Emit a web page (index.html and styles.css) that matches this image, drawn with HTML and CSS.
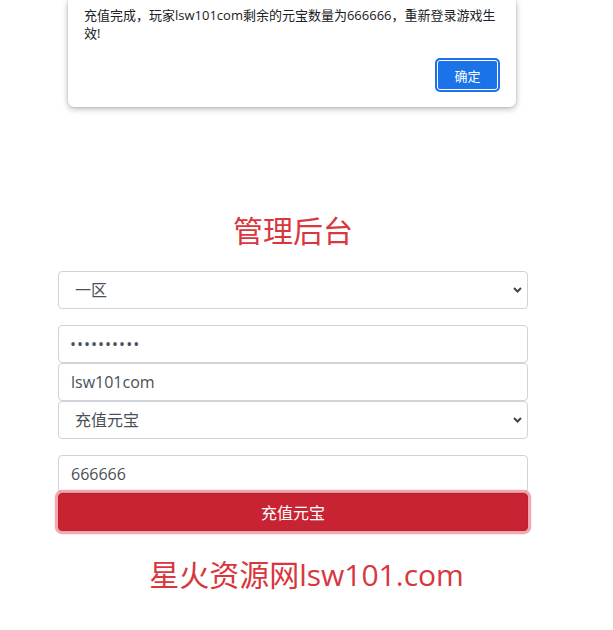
FILE: index.html
```html
<!DOCTYPE html>
<html lang="zh-CN">
<head>
<meta charset="utf-8">
<title>管理后台</title>
<link rel="stylesheet" href="styles.css">
</head>
<body>
<div class="page">
  <h1 class="title">管理后台</h1>
  <form class="form">
    <select class="control select gap">
      <option>一区</option>
    </select>
    <input class="control password" type="password" value="1234567890">
    <input class="control" type="text" value="lsw101com">
    <select class="control select gap">
      <option>充值元宝</option>
    </select>
    <input class="control" type="text" value="666666">
    <button type="button" class="btn-danger">充值元宝</button>
  </form>
  <p class="brand">星火资源网lsw101.com</p>
</div>

<div class="dialog">
  <p class="dialog-text">充值完成，玩家lsw101com剩余的元宝数量为666666，重新登录游戏生效!</p>
  <div class="dialog-actions">
    <button type="button" class="btn-ok">确定</button>
  </div>
</div>
</body>
</html>
```

FILE: styles.css
```css
* { box-sizing: border-box; }

html, body {
  margin: 0;
  padding: 0;
  background: #fff;
}

body {
  font-family: "Open Sans", "Noto Sans CJK SC", sans-serif;
  color: #212529;
  width: 613px;
  height: 630px;
  overflow: hidden;
  position: relative;
}

.page {
  padding-top: 211px;
}

.title {
  margin: 0 0 24px 58px;
  width: 470px;
  font-weight: 400;
  font-size: 30px;
  line-height: 36px;
  text-align: center;
  color: #d9363e;
  font-family: "Noto Sans CJK SC", sans-serif;
}

.form {
  margin: 0 0 0 58px;
  width: 470px;
  display: flex;
  flex-direction: column;
}

.control {
  display: block;
  width: 100%;
  height: 38px;
  padding: 6px 12px;
  font-family: "Open Sans", "Noto Sans CJK SC", sans-serif;
  font-size: 16px;
  line-height: 24px;
  color: #495057;
  background: #fff;
  border: 1px solid #ced4da;
  border-radius: 4px;
  outline: none;
}

.password {
  letter-spacing: 1px;
  padding-left: 11px;
}

.select {
  appearance: none;
  -webkit-appearance: none;
  padding-left: 16px;
  background-image: url("data:image/svg+xml,%3Csvg xmlns='http://www.w3.org/2000/svg' width='9' height='6' viewBox='0 0 9 6'%3E%3Cpath d='M1 1l3.5 3.5 3.5-3.5' fill='none' stroke='%23444' stroke-width='2'/%3E%3C/svg%3E");
  background-repeat: no-repeat;
  background-position: right 5px center;
  background-size: 9px 6px;
}

.gap { margin-bottom: 16px; }

.btn-danger {
  display: block;
  width: 100%;
  height: 38px;
  padding: 6px 12px;
  font-family: "Noto Sans CJK SC", sans-serif;
  font-size: 16px;
  line-height: 24px;
  color: #fff;
  background: #c82333;
  border: 1px solid #bd2130;
  border-radius: 4px;
  box-shadow: 0 0 0 3.2px rgba(225, 83, 97, 0.5);
  cursor: pointer;
}

.brand {
  margin: 26px 0 0;
  text-align: center;
  font-size: 30px;
  line-height: 36px;
  color: #d9363e;
  font-family: "Open Sans", "Noto Sans CJK SC", sans-serif;
}

.dialog {
  position: absolute;
  top: 0;
  left: 68px;
  width: 448px;
  padding: 6px 16px 15px;
  background: #fff;
  border-radius: 0 0 6px 6px;
  box-shadow: 0 0 0 1px rgba(0, 0, 0, 0.06), 0 2px 6px rgba(0, 0, 0, 0.28);
  font-family: "Open Sans", "Noto Sans CJK SC", sans-serif;
}

.dialog-text {
  margin: 0 0 16px;
  font-size: 13px;
  line-height: 18px;
  color: #202124;
}

.dialog-actions {
  display: flex;
  justify-content: flex-end;
}

.btn-ok {
  width: 65px;
  height: 34px;
  padding: 0;
  font-family: "Noto Sans CJK SC", sans-serif;
  font-size: 13px;
  color: #fff;
  background: #1a73e8;
  border: 2px solid #1a73e8;
  border-radius: 5px;
  box-shadow: inset 0 0 0 1px #fff;
}
```
